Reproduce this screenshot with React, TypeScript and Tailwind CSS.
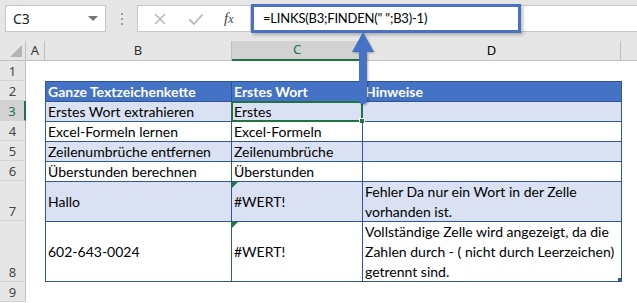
import React from 'react'

const cellFont = { fontFamily: 'Lato, "Liberation Sans", sans-serif' }

type Row = {
  n: number
  h: string
  band: boolean
  b: React.ReactNode
  c: React.ReactNode
  d: React.ReactNode
  err?: boolean
}

const rows: Row[] = [
  { n: 3, h: 'h-[20px]', band: true, b: 'Erstes Wort extrahieren', c: 'Erstes', d: '' },
  { n: 4, h: 'h-[20px]', band: false, b: 'Excel-Formeln lernen', c: 'Excel-Formeln', d: '' },
  { n: 5, h: 'h-[20px]', band: true, b: 'Zeilenumbrüche entfernen', c: 'Zeilenumbrüche', d: '' },
  { n: 6, h: 'h-[20px]', band: false, b: 'Überstunden berechnen', c: 'Überstunden', d: '' },
  {
    n: 7,
    h: 'h-[40px]',
    band: true,
    b: 'Hallo',
    c: '#WERT!',
    d: (
      <>
        Fehler Da nur ein Wort in der Zelle
        <br />
        vorhanden ist.
      </>
    ),
    err: true,
  },
  {
    n: 8,
    h: 'h-[61px]',
    band: false,
    b: '602-643-0024',
    c: '#WERT!',
    d: (
      <>
        Vollständige Zelle wird angezeigt, da die
        <br />
        Zahlen durch - ( nicht durch Leerzeichen)
        <br />
        getrennt sind.
      </>
    ),
    err: true,
  },
]

function RowHead({ n, active, alignBottom }: { n: number; active?: boolean; alignBottom?: boolean }) {
  return (
    <div
      className={`h-full w-[26px] shrink-0 flex justify-center text-[13px] leading-[18px] border-b border-[#d4d4d4] ${
        alignBottom ? 'items-end' : 'items-center'
      } ${active ? 'bg-[#d2d2d2] text-[#217346] border-r-2 border-r-[#217346]' : 'bg-[#e6e6e6] text-[#444] border-r border-r-[#bfbfbf]'}`}
    >
      {n}
    </div>
  )
}

function ErrMark() {
  return <div className="absolute left-0 top-0 w-0 h-0 border-t-[6px] border-t-[#1e7b3c] border-r-[6px] border-r-transparent" />
}

export default function App() {
  return (
    <div className="w-[637px] h-[303px] bg-white overflow-hidden relative" style={{ fontFamily: '"Noto Sans", "Liberation Sans", sans-serif' }}>
      {/* formula bar */}
      <div className="h-[41px] bg-[#e6e6e6] pt-[5px]">
        <div className="flex h-[27px] items-stretch">
          <div className="ml-[5px] w-[101px] bg-white border border-[#c6c6c6] flex items-center justify-between pl-[7px] pr-[7px] text-[14px] text-[#222]">
            <span>C3</span>
            <span className="w-0 h-0 border-l-[5px] border-r-[5px] border-t-[5px] border-l-transparent border-r-transparent border-t-[#777]" />
          </div>
          <div className="w-[31px] flex flex-col items-center justify-center gap-[3px]">
            <span className="w-[2px] h-[2px] bg-[#a0a0a0]" />
            <span className="w-[2px] h-[2px] bg-[#a0a0a0]" />
            <span className="w-[2px] h-[2px] bg-[#a0a0a0]" />
          </div>
          <div className="w-[114px] bg-white border border-[#c6c6c6] flex items-center">
            <svg width="14" height="14" viewBox="0 0 14 14" className="ml-[15px]">
              <path d="M2 2 L12 12 M12 2 L2 12" stroke="#b8b8b8" strokeWidth="1.5" />
            </svg>
            <svg width="16" height="14" viewBox="0 0 16 14" className="ml-[21px]">
              <path d="M1.5 7.5 L6 12 L14.5 2.5" stroke="#b8b8b8" strokeWidth="1.8" fill="none" />
            </svg>
            <span className="ml-[20px] text-[15px] italic text-[#444]" style={{ fontFamily: '"Liberation Serif", serif' }}>
              f<span className="text-[12px]">x</span>
            </span>
          </div>
          <div className="flex-1 bg-white border-y border-[#c6c6c6] relative">
            <div
              className="absolute left-0 top-[-2px] w-[270px] h-[29px] border-[3px] border-[#4a72c0] flex items-center pl-[9px] text-[13px] tracking-[-0.2px] text-black shadow-[2px_2px_3px_rgba(0,0,0,0.25)]"
              style={cellFont}
            >
              =LINKS(B3;FINDEN(" ";B3)-1)
            </div>
          </div>
        </div>
      </div>

      {/* column headers */}
      <div className="flex h-[20px] text-[13px] text-[#333]">
        <div className="w-[26px] shrink-0 bg-[#e6e6e6] border-r border-b border-[#bfbfbf] relative">
          <div className="absolute right-[3px] bottom-[3px] w-0 h-0 border-l-[12px] border-l-transparent border-b-[12px] border-b-[#b4b4b4]" />
        </div>
        <div className="w-[19px] shrink-0 bg-[#e6e6e6] border-r border-b border-[#bfbfbf] flex items-center justify-center">A</div>
        <div className="w-[187px] shrink-0 bg-[#e6e6e6] border-r border-b border-[#bfbfbf] flex items-center justify-center">B</div>
        <div className="w-[131px] shrink-0 bg-[#d2d2d2] border-r border-[#bfbfbf] border-b-2 border-b-[#217346] flex items-center justify-center text-[#217346]">C</div>
        <div className="w-[258px] shrink-0 bg-[#e6e6e6] border-r border-b border-[#bfbfbf] flex items-center justify-center text-black">D</div>
        <div className="flex-1 bg-[#e6e6e6] border-b border-[#bfbfbf]" />
      </div>

      {/* row 1 */}
      <div className="flex h-[20px]">
        <RowHead n={1} />
        <div className="flex-1" />
      </div>

      {/* row 2: table header */}
      <div className="flex h-[20px]">
        <RowHead n={2} />
        <div className="w-[19px] shrink-0" />
        <div className="flex bg-[#4472c4] text-white font-bold text-[14px] leading-[18px] border border-[#2f5597] border-b-0" style={cellFont}>
          <div className="w-[186px] border-r border-[#2f5597] px-[2px] flex items-center">Ganze Textzeichenkette</div>
          <div className="w-[131px] border-r border-[#2f5597] px-[2px] flex items-center">Erstes Wort</div>
          <div className="w-[258px] px-[2px] flex items-center">Hinweise</div>
        </div>
      </div>

      {/* data rows */}
      {rows.map((r) => (
        <div key={r.n} className={`flex ${r.h}`}>
          <RowHead n={r.n} active={r.n === 3} alignBottom={r.n >= 7} />
          <div className="w-[19px] shrink-0" />
          <div
            className={`flex text-[14px] leading-[19px] text-black border-x border-t border-[#2f5597] ${r.n === 8 ? 'border-b' : ''} ${
              r.band ? 'bg-[#d9e1f2]' : 'bg-white'
            }`}
            style={cellFont}
          >
            <div className="w-[186px] border-r border-[#2f5597] px-[2px] flex items-center">{r.b}</div>
            <div className="w-[131px] border-r border-[#2f5597] px-[2px] flex items-center relative">
              {r.err && <ErrMark />}
              {r.c}
              {r.n === 3 && (
                <div className="absolute left-[-1px] top-[-1px] right-[-1px] bottom-[-1px] border-2 border-[#217346]">
                  <div className="absolute right-[-4px] bottom-[-4px] w-[6px] h-[6px] bg-[#217346] border border-white" />
                </div>
              )}
            </div>
            <div className="w-[258px] px-[2px] flex items-center leading-[20px] relative">
              {r.d}
              {r.n === 8 && <div className="absolute right-0 bottom-0 w-[3px] h-[3px] bg-[#2f5597]" />}
            </div>
          </div>
        </div>
      ))}

      {/* row 9 */}
      <div className="flex h-[20px]">
        <RowHead n={9} />
        <div className="flex-1" />
      </div>

      {/* arrow from formula to selected cell */}
      <svg className="absolute left-[348px] top-[30px]" width="32" height="80" viewBox="0 0 32 80">
        <defs>
          <filter id="sh" x="-30%" y="-10%" width="160%" height="130%">
            <feDropShadow dx="1" dy="1" stdDeviation="1" floodColor="#000" floodOpacity="0.3" />
          </filter>
        </defs>
        <path d="M15 2 L26 22 L19 22 L19 71 Q19 74 15 74 Q11 74 11 71 L11 22 L4 22 Z" fill="#4472c4" filter="url(#sh)" />
      </svg>
    </div>
  )
}
